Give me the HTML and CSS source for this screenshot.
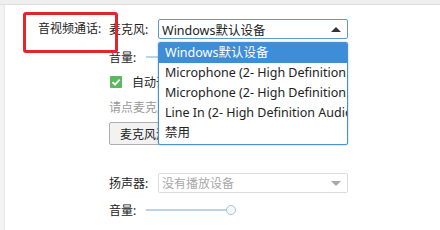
FILE: index.html
```html
<!DOCTYPE html>
<html>
<head>
<meta charset="utf-8">
<link rel="stylesheet" href="styles.css">
</head>
<body>
<div class="topbar"></div>
<div class="frame">
  <div class="leftbar"></div>
  <div class="page">
    <div class="section">
      <div class="sec-label">音视频通话:</div>
      <div class="sec-body">
        <div class="row row-mic">
          <span class="lbl">麦克风:</span>
          <div class="select-wrap">
            <div class="select focused">
              <span class="sel-text">Windows默认设备</span>
              <span class="arrow-up"></span>
            </div>
            <ul class="popup">
              <li class="opt active">Windows默认设备</li>
              <li class="opt">Microphone (2- High Definition Audio Device)</li>
              <li class="opt">Microphone (2- High Definition Audio Device)</li>
              <li class="opt">Line In (2- High Definition Audio Device)</li>
              <li class="opt">禁用</li>
            </ul>
          </div>
        </div>
        <div class="row row-vol1">
          <span class="lbl lbl-vol">音量:</span>
          <div class="slider"><div class="track"></div><div class="knob"></div></div>
        </div>
        <div class="row row-check">
          <span class="check">
            <svg width="12" height="12" viewBox="0 0 12 12"><path d="M2.5 6.2 L5 8.6 L9.6 3.6" fill="none" stroke="#fff" stroke-width="1.8"/></svg>
          </span>
          <span class="check-text">自动调节麦克风音量</span>
        </div>
        <div class="row row-hint">
          <span class="hint">请点麦克风测试按钮进行测试</span>
        </div>
        <div class="row row-btn">
          <button class="btn">麦克风测试</button>
        </div>
        <div class="row row-spk">
          <span class="lbl">扬声器:</span>
          <div class="select disabled">
            <span class="sel-text">没有播放设备</span>
            <span class="arrow-down"></span>
          </div>
        </div>
        <div class="row row-vol2">
          <span class="lbl lbl-vol">音量:</span>
          <div class="slider"><div class="track"></div><div class="knob"></div></div>
        </div>
      </div>
    </div>
  </div>
</div>
<div class="annot"></div>
</body>
</html>
```
FILE: styles.css
```css
* { box-sizing: border-box; }
html, body { margin: 0; padding: 0; }
body {
  width: 440px;
  height: 230px;
  overflow: hidden;
  background: #fff;
  font-family: "Noto Sans", "Noto Sans CJK SC", sans-serif;
  font-size: 12px;
  color: #222;
  position: relative;
}
.topbar {
  height: 5px;
  background: #efefef;
  border-bottom: 1px solid #dedede;
}
.frame { display: flex; height: 225px; }
.leftbar {
  width: 5px;
  background: #f3f3f3;
  border-right: 1px solid #e8e8e8;
}
.page { flex: 1; }
.section { display: flex; padding-top: 14px; }
.sec-label {
  width: 104px;
  padding-left: 33px;
  height: 20px;
  line-height: 20px;
  white-space: nowrap;
}
.sec-body { display: flex; flex-direction: column; }
.row { display: flex; align-items: center; height: 20px; }
.lbl { width: 49px; white-space: nowrap; }
.lbl-vol { width: 37px; }
.row-vol1 { margin-top: 8px; }
.row-check { margin-top: 5px; }
.row-hint { margin-top: 5px; }
.row-btn { margin-top: 5px; height: 23px; }
.row-spk { margin-top: 28px; }
.row-vol2 { margin-top: 7px; }

.select-wrap { position: relative; }
.select {
  width: 190px;
  height: 20px;
  border: 1px solid #c8c8c8;
  border-radius: 2px;
  display: flex;
  align-items: center;
  justify-content: space-between;
  padding: 0 6px 0 3px;
  background: #fff;
}
.select.focused { border-color: #5b9bd5; font-size: 12.5px; }
.select.disabled { color: #a8a8a8; border-color: #dcdcdc; }
.sel-text { white-space: nowrap; }
.arrow-up {
  width: 0; height: 0;
  border-left: 5px solid transparent;
  border-right: 5px solid transparent;
  border-bottom: 5px solid #333;
}
.arrow-down {
  width: 0; height: 0;
  border-left: 5px solid transparent;
  border-right: 5px solid transparent;
  border-top: 5px solid #a8a8a8;
}
.popup {
  position: absolute;
  left: 0;
  top: 23px;
  width: 190px;
  margin: 0;
  padding: 0 0 1px 0;
  list-style: none;
  background: #fff;
  border: 1px solid #4a8fd6;
  box-shadow: 0 0 2px rgba(74, 143, 214, 0.6);
  border-radius: 2px;
  overflow: hidden;
  z-index: 2;
  font-size: 12.5px;
}
.opt {
  height: 20px;
  line-height: 20px;
  padding-left: 6px;
  white-space: nowrap;
  overflow: hidden;
}
.opt.active { background: #3d8dd8; color: #fff; }

.slider { position: relative; width: 90px; height: 12px; }
.track {
  position: absolute;
  left: 0; right: 5px; top: 5px;
  height: 2px;
  background: #bcd3e3;
}
.knob {
  position: absolute;
  right: 0; top: 1px;
  width: 10px; height: 10px;
  border: 1px solid #a9c4da;
  border-radius: 50%;
  background: #f4f8fb;
}
.check {
  width: 12px; height: 12px;
  margin-left: 1px;
  background: #5cb85c;
  border-radius: 1px;
  display: flex;
}
.check-text { margin-left: 10px; white-space: nowrap; }
.hint { color: #999; white-space: nowrap; }
.btn {
  width: 78px;
  height: 23px;
  font: inherit;
  color: #222;
  background: #f2f2f2;
  border: 1px solid #adadad;
  border-radius: 2px;
  padding: 0 0 0 10px;
  text-align: left;
  white-space: nowrap;
  overflow: hidden;
}
.annot {
  position: absolute;
  left: 23px;
  top: 12px;
  width: 95px;
  height: 41px;
  border: 3px solid #e3262a;
  border-radius: 3px;
  z-index: 3;
}
```
